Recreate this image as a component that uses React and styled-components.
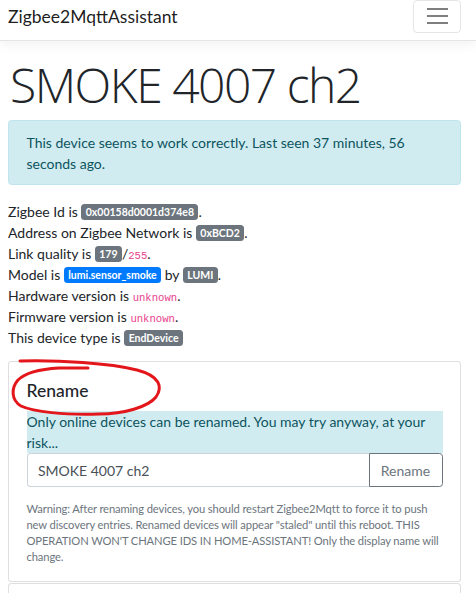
import React from "react";
import styled, { createGlobalStyle } from "styled-components";

const GlobalStyle = createGlobalStyle`
  html, body {
    margin: 0;
    padding: 0;
    background: #fff;
  }
  body {
    font-family: 'Lato', 'Liberation Sans', sans-serif;
    font-size: 14px;
    line-height: 21px;
    color: #212529;
  }
`;

const Navbar = styled.nav`
  display: flex;
  align-items: center;
  justify-content: space-between;
  height: 41px;
  padding: 0 15px 8px 8px;
  box-sizing: border-box;
  background: #fff;
  border-bottom: 1px solid #e5e5e5;
  box-shadow: 0 3.5px 10.5px rgba(0, 0, 0, 0.05);
`;
const Brand = styled.a`
  font-size: 17.5px;
  line-height: 21px;
  color: rgba(0, 0, 0, 0.9);
  text-decoration: none;
`;
const Toggler = styled.button`
  display: flex;
  flex-direction: column;
  align-items: center;
  justify-content: center;
  gap: 5px;
  width: 48px;
  height: 33px;
  padding: 0;
  background: transparent;
  border: 1px solid rgba(0, 0, 0, 0.1);
  border-radius: 4px;
`;
const Bar = styled.span`
  display: block;
  width: 21px;
  height: 2px;
  background: rgba(0, 0, 0, 0.5);
`;

const Main = styled.main`
  padding: 15px 15px 0 8px;
`;
const Title = styled.h1`
  margin: 0 0 7px 2px;
  font-family: 'Open Sans', 'Noto Sans', sans-serif;
  font-weight: 300;
  font-size: 48px;
  line-height: 57px;
  letter-spacing: -1.5px;
  color: #212529;
`;
const Alert = styled.div`
  padding: 10.5px 17.5px;
  margin-bottom: 16px;
  background: #d1ecf1;
  border: 1px solid #bee5eb;
  border-radius: 3.5px;
  color: #0c5460;
`;
const Facts = styled.div`
  display: flex;
  flex-direction: column;
  margin-bottom: 13px;
`;
const Line = styled.div`
  height: 21px;
  line-height: 21px;
  white-space: nowrap;
`;
const Badge = styled.span`
  display: inline-block;
  padding: 2.8px 4.4px;
  font-size: 10.5px;
  font-weight: 700;
  line-height: 1;
  vertical-align: 1px;
  border-radius: 3.5px;
  color: #fff;
  background: ${(p) => (p.$primary ? "#007bff" : "#6c757d")};
`;
const Code = styled.code`
  font-family: 'Liberation Mono', 'DejaVu Sans Mono', monospace;
  font-size: 10.6px;
  line-height: 1;
  color: #e83e8c;
`;

const Card = styled.section`
  position: relative;
  min-height: ${(p) => p.$minHeight || "auto"};
  border: 1px solid rgba(0, 0, 0, 0.125);
  border-radius: 3.5px;
  background: #fff;
  padding: 17.5px 17.5px 16px;
  & + & {
    margin-top: 1px;
  }
`;
const CardTitle = styled.h5`
  margin: 0 0 10.5px;
  font-size: 17.5px;
  font-weight: 500;
  line-height: 21px;
  color: #212529;
`;
const Notice = styled.div`
  background: #d1ecf1;
  color: #0c5460;
`;
const InputGroup = styled.div`
  display: flex;
  height: 34px;
`;
const Input = styled.input`
  flex: 1;
  min-width: 0;
  padding: 0 10.5px;
  font-family: inherit;
  font-size: 14px;
  color: #495057;
  border: 1px solid #ced4da;
  border-right: none;
  border-radius: 3.5px 0 0 3.5px;
  outline: none;
`;
const Button = styled.button`
  width: 74px;
  padding: 0;
  font-family: inherit;
  font-size: 14px;
  color: #6c757d;
  background: transparent;
  border: 1px solid #6c757d;
  border-radius: 0 3.5px 3.5px 0;
`;
const Hint = styled.small`
  display: block;
  margin-top: 14px;
  font-size: 11.2px;
  line-height: 16px;
  letter-spacing: -0.12px;
  color: #6c757d;
`;
const Scribble = styled.svg`
  position: absolute;
  left: 0;
  top: 0;
  width: 170px;
  height: 60px;
  overflow: visible;
  pointer-events: none;
`;

export default function App() {
  return (
    <>
      <GlobalStyle />
      <Navbar>
        <Brand href="#">Zigbee2MqttAssistant</Brand>
        <Toggler aria-label="menu">
          <Bar />
          <Bar />
          <Bar />
        </Toggler>
      </Navbar>
      <Main>
        <Title>SMOKE 4007 ch2</Title>
        <Alert>This device seems to work correctly. Last seen 37 minutes, 56 seconds ago.</Alert>
        <Facts>
          <Line>Zigbee Id is <Badge>0x00158d0001d374e8</Badge>.</Line>
          <Line>Address on Zigbee Network is <Badge>0xBCD2</Badge>.</Line>
          <Line>Link quality is <Badge>179</Badge>/<Code>255</Code>.</Line>
          <Line>Model is <Badge $primary>lumi.sensor_smoke</Badge> by <Badge>LUMI</Badge>.</Line>
          <Line>Hardware version is <Code>unknown</Code>.</Line>
          <Line>Firmware version is <Code>unknown</Code>.</Line>
          <Line>This device type is <Badge>EndDevice</Badge></Line>
        </Facts>
        <Card>
          <Scribble viewBox="0 0 170 60">
            <path
              d="M 11 -1 C 50 -2, 100 1, 128 8 C 151 14, 154 25, 147 35 C 139 45, 115 52, 90 52 C 55 53, 25 50, 12 44 C 2 38, 2 26, 9 18 C 17 10, 33 7, 50 6 L 79 6"
              fill="none"
              stroke="#e3161b"
              strokeWidth="3"
              strokeLinecap="round"
              strokeLinejoin="round"
            />
          </Scribble>
          <CardTitle>Rename</CardTitle>
          <Notice>Only online devices can be renamed. You may try anyway, at your risk...</Notice>
          <InputGroup>
            <Input defaultValue="SMOKE 4007 ch2" />
            <Button>Rename</Button>
          </InputGroup>
          <Hint>
            Warning: After renaming devices, you should restart Zigbee2Mqtt to force it to push new discovery entries.
            Renamed devices will appear "staled" until this reboot. THIS OPERATION WON'T CHANGE IDS IN HOME-ASSISTANT!
            Only the display name will change.
          </Hint>
        </Card>
        <Card $minHeight="60px" />
      </Main>
    </>
  );
}
